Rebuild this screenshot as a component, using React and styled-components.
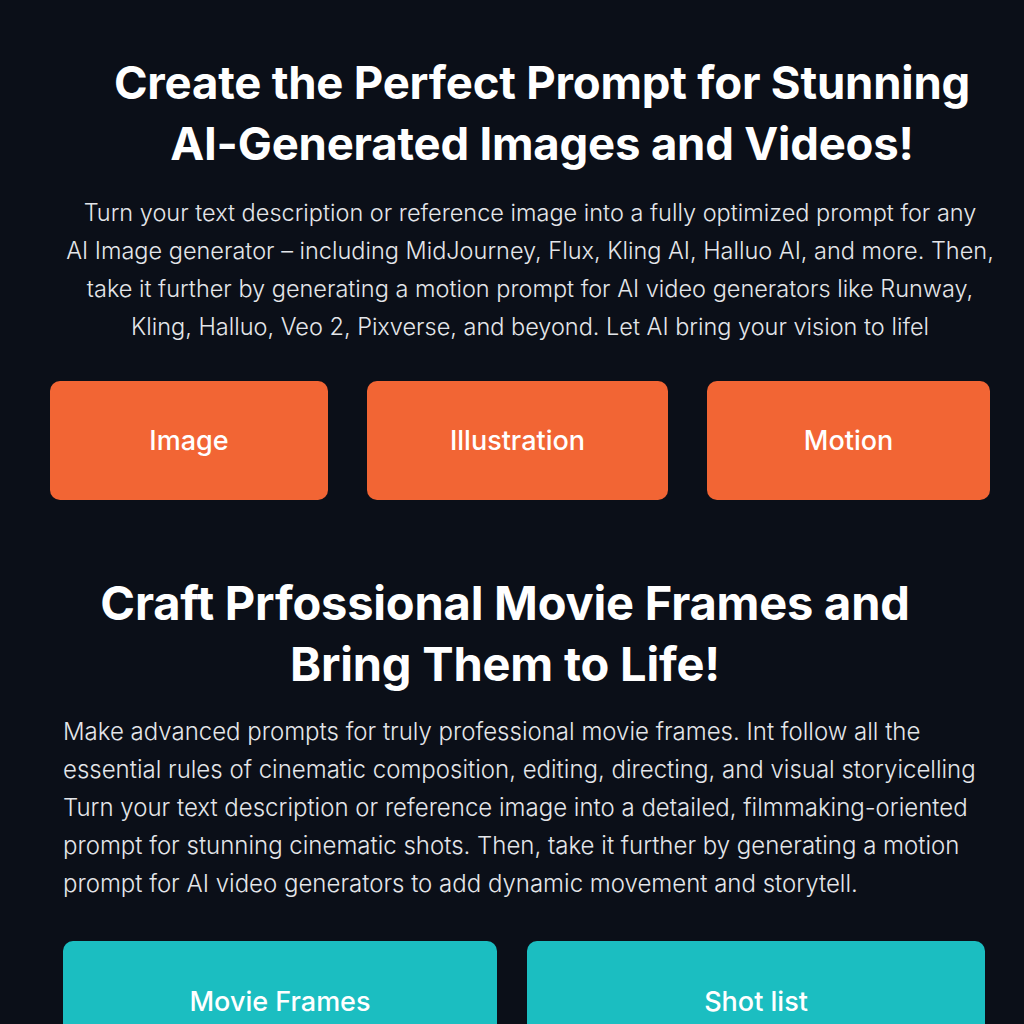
import styled, { createGlobalStyle } from "styled-components";

const GlobalStyle = createGlobalStyle`
  html, body {
    margin: 0;
    padding: 0;
    background: #0b0f18;
  }
  body {
    font-family: Inter, "Noto Sans", sans-serif;
    color: #ffffff;
  }
`;

const Page = styled.div`
  width: 1024px;
  height: 1024px;
  overflow: hidden;
  background: #0b0f18;
  display: flex;
  flex-direction: column;
`;

const Section = styled.section`
  display: flex;
  flex-direction: column;
  padding-top: ${(p) => p.$top}px;
`;

const Heading = styled.h1`
  margin: 0 0 0 ${(p) => p.$shift || 0}px;
  font-size: ${(p) => p.$size || 46}px;
  font-weight: 700;
  line-height: 61px;
  letter-spacing: -0.2px;
  color: #ffffff;
  text-align: center;
  white-space: nowrap;
`;

const Lead = styled.p`
  margin: ${(p) => p.$top}px 0 0 ${(p) => p.$shift || 0}px;
  font-size: ${(p) => p.$size || 24}px;
  font-weight: 300;
  line-height: 38px;
  color: #e4e6ea;
  white-space: nowrap;
  text-align: ${(p) => p.$align || "center"};
`;

const ButtonRow = styled.div`
  display: grid;
  grid-template-columns: ${(p) => p.$cols};
  column-gap: ${(p) => p.$gap}px;
  padding-left: ${(p) => p.$left}px;
  margin-top: ${(p) => p.$top}px;
`;

const Tile = styled.button`
  height: ${(p) => p.$height}px;
  border: none;
  border-radius: 10px;
  background: ${(p) => p.$color};
  color: #ffffff;
  font-family: Inter, "Noto Sans", sans-serif;
  font-size: 27px;
  font-weight: 500;
  display: flex;
  align-items: center;
  justify-content: center;
  cursor: pointer;
`;

const App = () => {
  return (
    <Page>
      <GlobalStyle />
      <Section $top={52}>
        <Heading $shift={60} $size={45.5}>
          Create the Perfect Prompt for Stunning
          <br />
          AI-Generated Images and Videos!
        </Heading>
        <Lead $top={20} $shift={36} $size={23.5}>
          Turn your text description or reference image into a fully optimized prompt for any
          <br />
          AI Image generator – including MidJourney, Flux, Kling AI, Halluo AI, and more. Then,
          <br />
          take it further by generating a motion prompt for AI video generators like Runway,
          <br />
          Kling, Halluo, Veo 2, Pixverse, and beyond. Let AI bring your vision to lifel
        </Lead>
        <ButtonRow $cols="278px 301px 283px" $gap={39} $left={50} $top={35}>
          <Tile $color="#f26534" $height={119}>Image</Tile>
          <Tile $color="#f26534" $height={119}>Illustration</Tile>
          <Tile $color="#f26534" $height={119}>Motion</Tile>
        </ButtonRow>
      </Section>
      <Section $top={72}>
        <Heading $shift={-14} $size={47}>
          Craft Prfossional Movie Frames and
          <br />
          Bring Them to Life!
        </Heading>
        <Lead $top={19} $align="left" $shift={63}>
          Make advanced prompts for truly professional movie frames. Int follow all the
          <br />
          essential rules of cinematic composition, editing, directing, and  visual storyicelling
          <br />
          Turn your text description or reference image into a detailed, filmmaking-oriented
          <br />
          prompt for stunning cinematic shots. Then, take it further by generating a motion
          <br />
          prompt for AI video generators to add dynamic movement and storytell.
        </Lead>
        <ButtonRow $cols="434px 458px" $gap={30} $left={63} $top={38}>
          <Tile $color="#1bbec1" $height={120}>Movie Frames</Tile>
          <Tile $color="#1bbec1" $height={120}>Shot list</Tile>
        </ButtonRow>
      </Section>
    </Page>
  );
};

export default App;
